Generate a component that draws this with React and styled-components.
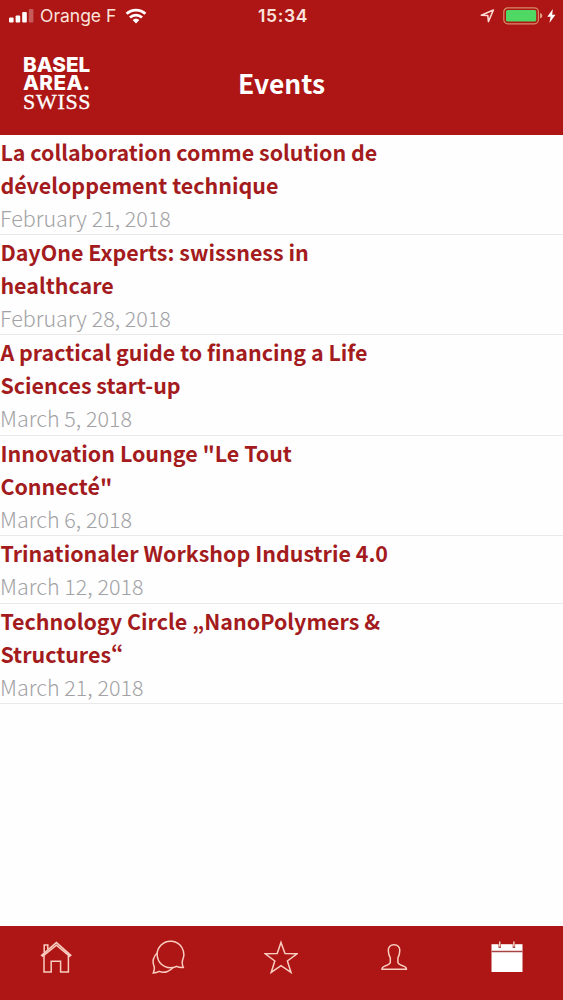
import styled, { createGlobalStyle } from "styled-components"

const GlobalStyle = createGlobalStyle`
  * {
    box-sizing: border-box;
  }
  body {
    margin: 0;
    background: #fefefe;
    font-family: "Noto Sans CJK SC", "Noto Sans", sans-serif;
  }
`;
const Screen = styled.div`
  width: 100%;
  height: 1000px;
  display: flex;
  flex-direction: column;
  overflow: hidden;
`;
const Header = styled.header`
  flex: none;
  height: 134.7px;
  background: #ad1614;
  color: #fff;
`;
const StatusBar = styled.div`
  height: 31px;
  padding: 0 7px 0 9px;
  display: grid;
  grid-template-columns: 1fr auto 1fr;
  align-items: center;
  font-family: Inter, sans-serif;
  font-size: 17.5px;
  line-height: 31px;
  color: #fbe3dc;
`;
const StatusGroup = styled.div`
  display: flex;
  align-items: center;
  justify-content: ${({ $end }) => ($end ? "flex-end" : "flex-start")};

  svg {
    flex: none;
    display: block;
  }
`;
const Carrier = styled.span`
  margin: 0 9px 0 6px;
`;
const Clock = styled.span`
  font-weight: 600;
  letter-spacing: 0.6px;
  padding-left: 1px;
`;
const Spacer = styled.span`
  width: ${({ $small }) => ($small ? "4px" : "8px")};
`;
const TitleBar = styled.div`
  height: 103px;
  padding: 0 22px;
  display: grid;
  grid-template-columns: 1fr auto 1fr;
  align-items: center;
`;
const LogoWrapper = styled.div`
  padding: 2px 0 0 1px;
  display: flex;
  flex-direction: column;
  color: #fff;
`;
const LogoLine = styled.span`
  height: 18.6px;
  line-height: 18.6px;
  white-space: nowrap;
  font-family: ${({ $serif }) => ($serif ? '"Liberation Serif", serif' : '"Inter", sans-serif')};
  font-size: ${({ $serif }) => ($serif ? "22px" : "20.7px")};
  font-weight: ${({ $serif }) => ($serif ? 400 : 800)};
  letter-spacing: ${({ $spacing }) => $spacing}px;
  -webkit-text-stroke: ${({ $serif }) => ($serif ? "0.3px" : "0")};
`;
const PageTitle = styled.h1`
  margin: 0;
  font-size: 26.4px;
  font-weight: 700;
  line-height: 36px;
`;
const EventList = styled.ul`
  flex: 1;
  margin: 0;
  padding: 0;
  list-style: none;
`;
const EventItem = styled.li`
  border-bottom: 1px solid #e9e9ec;
  padding-bottom: 0.4px;
`;
const EventTitle = styled.h2`
  margin: 0;
  width: 394px;
  padding-left: 0.4px;
  font-size: 21.45px;
  font-weight: 700;
  line-height: 33px;
  font-feature-settings: "pwid";
  color: #a31b1d;
`;
const EventDate = styled.p`
  margin: 0;
  font-size: 21.5px;
  font-weight: 300;
  line-height: 33px;
  color: #a2a2a5;
`;
const TabBar = styled.nav`
  flex: none;
  height: 74px;
  background: #ad1614;
  display: grid;
  grid-template-columns: repeat(5, 1fr);
`;
const Tab = styled.button`
  border: 0;
  padding: 14px 0 0;
  background: none;
  display: flex;
  justify-content: center;
  align-items: flex-start;

  svg {
    display: block;
    fill: none;
    stroke: #f9cdc0;
    stroke-width: 1.5;
  }
`;

const events = [
  { title: "La collaboration comme solution de développement technique", date: "February 21, 2018" },
  { title: "DayOne Experts: swissness in healthcare", date: "February 28, 2018" },
  { title: "A practical guide to financing a Life Sciences start-up", date: "March 5, 2018" },
  { title: 'Innovation Lounge "Le Tout Connecté"', date: "March 6, 2018" },
  { title: "Trinationaler Workshop Industrie 4.0", date: "March 12, 2018" },
  { title: "Technology Circle „NanoPolymers & Structures“", date: "March 21, 2018" },
];

const Signal = () => (
  <svg width="25" height="14" viewBox="0 0 25 14" fill="#fff">
    <rect x="0" y="8.4" width="4.6" height="5" rx="1" />
    <rect x="6.6" y="6.4" width="4.6" height="7" rx="1" />
    <rect x="13.2" y="3" width="4.6" height="10.4" rx="1" />
    <rect x="19.8" y="0" width="4.6" height="13.4" rx="1" opacity="0.3" />
  </svg>
)

const Wifi = () => (
  <svg width="22" height="16" viewBox="0 0 22 16" fill="none" stroke="#fff" strokeWidth="2.8">
    <path d="M1.6 5.8a13.6 13.6 0 0 1 18.8 0" />
    <path d="M5 9.5a8.6 8.6 0 0 1 12 0" />
    <path d="M7.6 12a5 5 0 0 1 6.8 0L11 15.4z" fill="#fff" stroke="none" />
  </svg>
)

const Location = () => (
  <svg width="15" height="14" viewBox="0 0 15 14" fill="none" stroke="#fbdcd5" strokeWidth="1.5">
    <path d="M1.3 6.2 13.4 1 8.4 12.6 7.8 6.4z" strokeLinejoin="round" />
  </svg>
)

const Battery = () => (
  <svg width="40" height="18" viewBox="0 0 40 18">
    <rect x="0.8" y="0.8" width="34.6" height="16" rx="4" fill="none" stroke="#d98a68" strokeWidth="1.2" />
    <rect x="3" y="3" width="30.2" height="11.6" rx="1.5" fill="#4fd964" />
    <path d="M37 6q2.4.6 2.4 2.8T37 11.6z" fill="#e59a85" />
  </svg>
)

const Bolt = () => (
  <svg width="9" height="14" viewBox="0 0 9 14" fill="#fff">
    <path d="M5.8 0 .3 7.8h3.3L2.4 14 8.5 5.8H5.2z" />
  </svg>
)

const Logo = () => (
  <LogoWrapper>
    <LogoLine $spacing={0}>BASEL</LogoLine>
    <LogoLine $spacing={0.4}>AREA.</LogoLine>
    <LogoLine $serif $spacing={0.7}>SWISS</LogoLine>
  </LogoWrapper>
)

const tabs = [
  {
    label: "Home",
    icon: (
      <>
        <path d="M2.6 15.2 17.4 2.6l14.4 12.6-1.2 1L17.4 5.2 3.8 16.2z" />
        <path d="M5 15.6V32h7.2V21.2h9.4V32h7.8V15.6M5.2 12.6V5h3.6v4.4" />
      </>
    ),
  },
  {
    label: "Messages",
    icon: (
      <>
        <path d="M31.2 27.4c-2.8.1-5-.2-6.6-1.1A13.3 13.3 0 1 1 30.6 20c-.6 2.3-.4 5 .6 7.4z" />
        <path d="M5.2 13A11.3 11.3 0 0 0 2.2 26.6c.4 2 .1 4-.9 6.3 2.3 0 4.2-.5 5.8-1.5 5 1.9 11.2.2 14.2-4.2" />
      </>
    ),
  },
  {
    label: "Favourites",
    icon: <path d="m17 2.4 4 11.2 12 .2-9.6 7.2 3.6 11.4-10-6.8-9.8 6.8 3.6-11.4L1.2 13.8l12-.2z" />,
  },
  {
    label: "Profile",
    icon: <path d="M17 4.8c-4 0-5.8 2.6-5.7 5.8.1 3.2.8 5.4 2 7.3v4.5c-.4 2.2-3 2.9-5.6 3.7-1.9.6-2.7 1.5-2.7 3.2h24.4c0-1.7-.8-2.6-2.7-3.2-2.6-.8-5.4-1.5-5.8-3.7v-4.5c1.2-1.9 1.8-4.1 1.9-7.3.1-3.2-1.8-5.8-5.8-5.8z" />,
  },
  {
    label: "Events",
    icon: (
      <>
        <path d="M1.5 4.2h31V32h-31z" fill="#fff" stroke="none" />
        <path d="M1.5 11.5h31" stroke="#a84442" />
        <path d="M9.7 4v4M23.9 4v4" stroke="#a84442" strokeWidth="2.4" />
        <path d="M9.7 1.4v5.2M23.9 1.4v5.2" stroke="#f7d5c0" strokeWidth="1.4" />
      </>
    ),
  },
];

const App = () => {
  return (
    <Screen>
      <GlobalStyle />
      <Header>
        <StatusBar>
          <StatusGroup>
            <Signal />
            <Carrier>Orange F</Carrier>
            <Wifi />
          </StatusGroup>
          <Clock>15:34</Clock>
          <StatusGroup $end>
            <Location />
            <Spacer />
            <Battery />
            <Spacer $small />
            <Bolt />
          </StatusGroup>
        </StatusBar>
        <TitleBar>
          <Logo />
          <PageTitle>Events</PageTitle>
        </TitleBar>
      </Header>

      <EventList>
        {events.map((event) => (
          <EventItem key={event.title}>
            <EventTitle>{event.title}</EventTitle>
            <EventDate>{event.date}</EventDate>
          </EventItem>
        ))}
      </EventList>

      <TabBar>
        {tabs.map((tab) => (
          <Tab key={tab.label} aria-label={tab.label}>
            <svg width="34" height="36" viewBox="0 0 34 36">{tab.icon}</svg>
          </Tab>
        ))}
      </TabBar>
    </Screen>
  )
}

export default App
